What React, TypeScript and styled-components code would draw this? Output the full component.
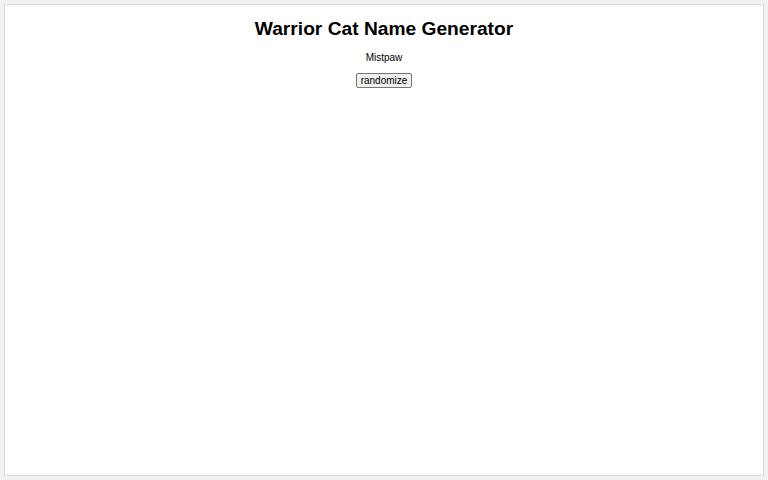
import React, { useState } from "react";
import styled, { createGlobalStyle } from "styled-components";

const Global = createGlobalStyle`
  html, body { margin: 0; padding: 0; background: #f2f2f2; }
  body { font-family: "Liberation Sans", Arial, sans-serif; }
`;

const Page = styled.div`
  padding: 4px 4px 4px 4px;
  box-sizing: border-box;
  height: 480px;
  display: flex;
`;

const Card = styled.main`
  flex: 1;
  background: #ffffff;
  border: 1px solid #dcdcdc;
  display: flex;
  flex-direction: column;
  align-items: center;
`;

const Title = styled.h1`
  margin: 13px 0 0;
  font-size: 19.2px;
  font-weight: bold;
  color: #000;
  line-height: 22px;
`;

const Name = styled.p`
  margin: 12px 0 0;
  font-size: 10px;
  line-height: 12px;
  color: #000;
`;

const Button = styled.button`
  margin-top: 9px;
  font-family: "Liberation Sans", Arial, sans-serif;
  font-size: 10px;
  line-height: 11px;
  padding: 1px 4px;
  color: #000;
  background: #efefef;
  border: 1px solid #767676;
  border-radius: 2px;
`;

const names = ["Mistpaw", "Firepaw", "Graystripe", "Ravenpaw", "Sandstorm"];

export default function App() {
  const [i, setI] = useState(0);
  return (
    <>
      <Global />
      <Page>
        <Card>
          <Title>Warrior Cat Name Generator</Title>
          <Name>{names[i]}</Name>
          <Button onClick={() => setI((i + 1) % names.length)}>randomize</Button>
        </Card>
      </Page>
    </>
  );
}
